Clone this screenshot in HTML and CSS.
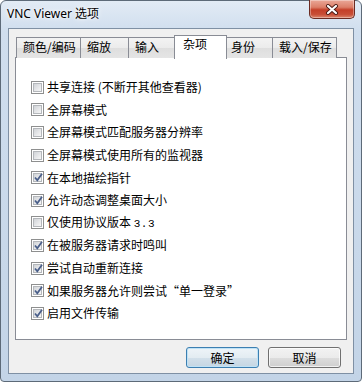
FILE: index.html
```html
<!DOCTYPE html>
<html lang="zh-CN">
<head>
<meta charset="utf-8">
<title>VNC Viewer 选项</title>
<link rel="stylesheet" href="styles.css">
</head>
<body>
<div class="window">
  <div class="titlebar">
    <span class="title">VNC Viewer 选项</span>
    <div class="close">
      <svg width="14" height="11" viewBox="0 0 14 11">
        <path d="M3 2 L11 9 M11 2 L3 9" stroke="#4a1a14" stroke-width="4" stroke-linecap="round"/>
        <path d="M3 2 L11 9 M11 2 L3 9" stroke="#ffffff" stroke-width="2.2" stroke-linecap="round"/>
      </svg>
    </div>
  </div>
  <div class="client">
    <div class="tabs">
      <div class="tab t-wide">颜色/编码</div>
      <div class="tab">缩放</div>
      <div class="tab">输入</div>
      <div class="tab active">杂项</div>
      <div class="tab">身份</div>
      <div class="tab t-wide">载入/保存</div>
    </div>
    <div class="panel">
      <label class="row"><span class="cb"></span><span class="lbl">共享连接 (不断开其他查看器)</span></label>
      <label class="row"><span class="cb"></span><span class="lbl">全屏幕模式</span></label>
      <label class="row"><span class="cb"></span><span class="lbl">全屏幕模式匹配服务器分辨率</span></label>
      <label class="row"><span class="cb"></span><span class="lbl">全屏幕模式使用所有的监视器</span></label>
      <label class="row"><span class="cb checked"></span><span class="lbl">在本地描绘指针</span></label>
      <label class="row"><span class="cb checked"></span><span class="lbl">允许动态调整桌面大小</span></label>
      <label class="row"><span class="cb"></span><span class="lbl">仅使用协议版本 <span class="mono">3.3</span></span></label>
      <label class="row"><span class="cb checked"></span><span class="lbl">在被服务器请求时鸣叫</span></label>
      <label class="row"><span class="cb checked"></span><span class="lbl">尝试自动重新连接</span></label>
      <label class="row"><span class="cb checked"></span><span class="lbl">如果服务器允许则尝试<span class="q">“</span>单一登录<span class="q">”</span></span></label>
      <label class="row"><span class="cb checked"></span><span class="lbl">启用文件传输</span></label>
    </div>
    <div class="buttons">
      <button class="btn default">确定</button>
      <button class="btn">取消</button>
    </div>
  </div>
</div>
</body>
</html>
```
FILE: styles.css
```css
* { box-sizing: border-box; }
html, body { margin: 0; padding: 0; }
body {
  width: 362px;
  height: 382px;
  overflow: hidden;
  background: #ffffff;
  font-family: "Noto Sans CJK SC", "Noto Sans", sans-serif;
  font-size: 12px;
  color: #000;
}
.window {
  width: 362px;
  height: 382px;
  border: 1px solid #5d6a78;
  border-radius: 6px 6px 4px 4px;
  background: linear-gradient(180deg, #e2ebf5 0px, #d0deee 30px, #c3d4e7 100%);
  display: flex;
  flex-direction: column;
  padding: 0 7px 7px 7px;
}
.titlebar {
  height: 27px;
  display: flex;
  align-items: flex-start;
  justify-content: space-between;
}
.title {
  margin-top: 6px;
  margin-left: -1px;
  font-family: "Noto Sans", "Noto Sans CJK SC", sans-serif;
  font-size: 12px;
  line-height: 14px;
  color: #000;
  text-shadow: 0 0 6px #ffffff, 0 0 3px #ffffff;
}
.close {
  width: 46px;
  height: 19px;
  margin-top: -1px;
  margin-right: -1px;
  border: 1px solid #6b2b22;
  border-top: none;
  border-radius: 0 0 5px 5px;
  background: linear-gradient(180deg, #eaa898 0%, #dc7f69 40%, #c43f28 55%, #c84e36 80%, #dc866c 100%);
  box-shadow: inset 0 0 0 1px rgba(255,255,255,0.35);
  display: flex;
  align-items: center;
  justify-content: center;
}
.client {
  flex: 1;
  border: 1px solid #7f90a4;
  background: #f0f0f0;
  padding: 6px 6px 5px 6px;
  display: flex;
  flex-direction: column;
}
.tabs {
  display: flex;
  align-items: flex-end;
  height: 23px;
  padding-left: 1px;
  margin-bottom: -1px;
  position: relative;
  z-index: 1;
}
.tab {
  width: 49px;
  height: 21px;
  margin-right: -1px;
  border: 1px solid #898c95;
  border-bottom: none;
  background: linear-gradient(180deg, #f3f3f3 0%, #ebebeb 50%, #dedede 51%, #e5e5e5 100%);
  padding: 2px 0 0 6px;
  line-height: 14px;
  white-space: nowrap;
}
.tab.t-wide { width: 65px; }
.tab.active {
  height: 24px;
  width: 53px;
  margin: 0 -3px -1px -2px;
  background: #ffffff;
  position: relative;
  z-index: 2;
  padding: 1px 0 0 8px;
}
.panel {
  height: 283px;
  border: 1px solid #898c95;
  background: #ffffff;
  padding: 18px 0 0 15px;
}
.row {
  display: flex;
  align-items: center;
  height: 22.6px;
}
.cb {
  width: 13px;
  height: 13px;
  flex: none;
  border: 1px solid #8e8f8f;
  background: #ffffff;
  padding: 2px;
  position: relative;
}
.cb::before {
  content: "";
  display: block;
  width: 7px;
  height: 7px;
  border: 1px solid #b4b7bb;
  background: linear-gradient(135deg, #d0d3d7 0%, #e8e9eb 60%, #f6f6f6 100%);
  box-sizing: content-box;
  margin: -1px;
}
.cb.checked::after {
  content: "";
  position: absolute;
  left: 1px;
  top: 0px;
  width: 11px;
  height: 11px;
  background: url("data:image/svg+xml;utf8,<svg xmlns='http://www.w3.org/2000/svg' width='11' height='11' viewBox='0 0 11 11'><path d='M2 5.5 L4.3 8.3 L9 1.8' fill='none' stroke='%234a5f8a' stroke-width='1.8'/></svg>") no-repeat;
}
.lbl {
  margin-left: 3px;
  line-height: 14px;
  white-space: nowrap;
}
.mono {
  font-family: "Liberation Mono", monospace;
  font-size: 11px;
  letter-spacing: 0.5px;
}
.q { font-family: "Noto Sans CJK SC", sans-serif; }
.buttons {
  display: flex;
  justify-content: flex-end;
  gap: 9px;
  margin-top: auto;
  padding-right: 6px;
}
.btn {
  width: 73px;
  height: 21px;
  font-family: "Noto Sans CJK SC", sans-serif;
  font-size: 12px;
  line-height: 14px;
  color: #000;
  border: 1px solid #707070;
  border-radius: 3px;
  background: linear-gradient(180deg, #f2f2f2 0%, #ebebeb 50%, #dddddd 51%, #cfcfcf 100%);
  box-shadow: inset 0 0 0 1px rgba(255,255,255,0.7);
  padding: 0;
}
.btn.default {
  border-color: #3c7fb1;
  background: linear-gradient(180deg, #eef4f8 0%, #e3ecf2 50%, #d3e0ea 51%, #c5d6e3 100%);
  box-shadow: inset 0 0 0 1px #bfe2f6;
}
```
